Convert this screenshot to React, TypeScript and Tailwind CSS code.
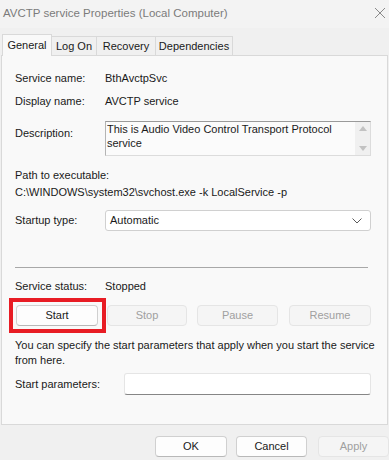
import React from "react";

const font = { fontFamily: '"Liberation Sans", Arial, sans-serif' };

function Btn({
  label,
  disabled,
  className = "",
}: {
  label: string;
  disabled?: boolean;
  className?: string;
}) {
  return (
    <div
      className={`flex items-center justify-center h-[21px] rounded-[4px] border ${
        disabled
          ? "bg-[#f5f5f5] border-[#e5e5e5] text-[#a0a0a0]"
          : "bg-[#fdfdfd] border-[#d0d0d0] border-b-[#b8b8b8] text-[#1a1a1a]"
      } ${className}`}
    >
      {label}
    </div>
  );
}

function Tab({ label, active, w }: { label: string; active?: boolean; w: string }) {
  return (
    <div
      className={`flex items-center justify-center border border-b-0 border-[#d9d9d9] ${w} ${
        active
          ? "h-[22px] bg-[#f9f9f9] -mb-px z-10 relative"
          : "h-[19px] bg-[#f0f0f0] -ml-px"
      }`}
    >
      {label}
    </div>
  );
}

export default function App() {
  return (
    <div
      style={font}
      className="w-[389px] h-[460px] bg-[#f0f0f0] overflow-hidden text-[11px] text-[#1a1a1a] flex flex-col"
    >
      {/* Title bar */}
      <div className="h-[28px] shrink-0 flex items-center justify-between pl-[3px] pr-[2px] bg-[#f3f3f3]">
        <span className="text-[11.5px] text-[#7b7b7b]">
          AVCTP service Properties (Local Computer)
        </span>
        <svg width="12" height="12" viewBox="0 0 12 12" className="mr-[1px] -mt-[2px]">
          <path d="M1 1L11 11M11 1L1 11" stroke="#8a8a8a" strokeWidth="1" />
        </svg>
      </div>

      {/* Tabs */}
      <div className="mt-[6px] pl-[2px] flex items-end h-[21px] shrink-0">
        <Tab label="General" active w="w-[50px]" />
        <Tab label="Log On" w="w-[46px]" />
        <Tab label="Recovery" w="w-[60px]" />
        <Tab label="Dependencies" w="w-[78px]" />
      </div>

      {/* Panel */}
      <div className="ml-[1px] w-[387px] h-[370px] shrink-0 bg-[#f9f9f9] border border-[#d9d9d9] pl-[13px] pr-[16px] flex flex-col relative">
        <div className="mt-[12px] h-[20px] flex items-center">
          <span className="w-[90px]">Service name:</span>
          <span>BthAvctpSvc</span>
        </div>
        <div className="mt-[3px] h-[20px] flex items-center">
          <span className="w-[90px]">Display name:</span>
          <span>AVCTP service</span>
        </div>
        <div className="mt-[10px] flex">
          <span className="w-[90px] pt-[4px]">Description:</span>
          <div className="flex-1 h-[35px] flex border border-[#dcdcdc] border-t-[#9a9a9a] border-l-[#b4b4b4] bg-[#fbfbfb]">
            <div className="flex-1 pl-[1px] leading-[14px]">
              This is Audio Video Control Transport Protocol service
            </div>
            <div className="w-[15px] bg-[#f0f0f0] flex flex-col items-center justify-between py-[4px]">
              <svg width="8" height="5" viewBox="0 0 8 5">
                <path d="M0 5L4 0L8 5Z" fill="#c2c2c2" />
              </svg>
              <svg width="8" height="5" viewBox="0 0 8 5">
                <path d="M0 0L8 0L4 5Z" fill="#c2c2c2" />
              </svg>
            </div>
          </div>
        </div>
        <div className="mt-[11px] h-[16px] flex items-center">Path to executable:</div>
        <div className="mt-[1px] h-[16px] flex items-center">
          C:\WINDOWS\system32\svchost.exe -k LocalService -p
        </div>
        <div className="mt-[10px] flex items-center">
          <span className="w-[90px]">Startup type:</span>
          <div className="flex-1 h-[21px] bg-white border border-[#d0d0d0] rounded-[3px] flex items-center justify-between pl-[4px] pr-[8px]">
            <span>Automatic</span>
            <svg width="10" height="6" viewBox="0 0 10 6">
              <path d="M0.5 0.5L5 5L9.5 0.5" stroke="#5a5a5a" strokeWidth="1" fill="none" />
            </svg>
          </div>
        </div>
        <div className="mt-[36px] h-px bg-[#a8a8a8] mr-[3px]" />
        <div className="mt-[10px] h-[16px] flex items-center">
          <span className="w-[90px]">Service status:</span>
          <span>Stopped</span>
        </div>
        <div className="mt-[11px] flex items-center relative">
          <div className="absolute left-[-6px] top-[-7px] w-[97px] h-[35px] border-[4px] border-[#e81c24]" />
          <div className="w-[83px] pl-[1px]">
            <Btn label="Start" className="w-[82px]" />
          </div>
          <Btn label="Stop" disabled className="w-[80px] ml-[9px]" />
          <Btn label="Pause" disabled className="w-[81px] ml-[10px]" />
          <Btn label="Resume" disabled className="w-[82px] ml-[11px]" />
        </div>
        <div className="mt-[12px] leading-[15px] whitespace-nowrap">
          You can specify the start parameters that apply when you start the service
          <br />
          from here.
        </div>
        <div className="mt-[5px] flex items-center">
          <span className="w-[109px]">Start parameters:</span>
          <div className="flex-1 h-[22px] bg-white border border-[#e5e5e5] border-b-[#868686] rounded-[3px]" />
        </div>
      </div>

      {/* Bottom buttons */}
      <div className="mt-[11px] flex justify-end">
        <Btn label="OK" className="w-[72px]" />
        <Btn label="Cancel" className="w-[71px] ml-[9px]" />
        <Btn label="Apply" disabled className="w-[71px] ml-[11px]" />
      </div>
    </div>
  );
}
